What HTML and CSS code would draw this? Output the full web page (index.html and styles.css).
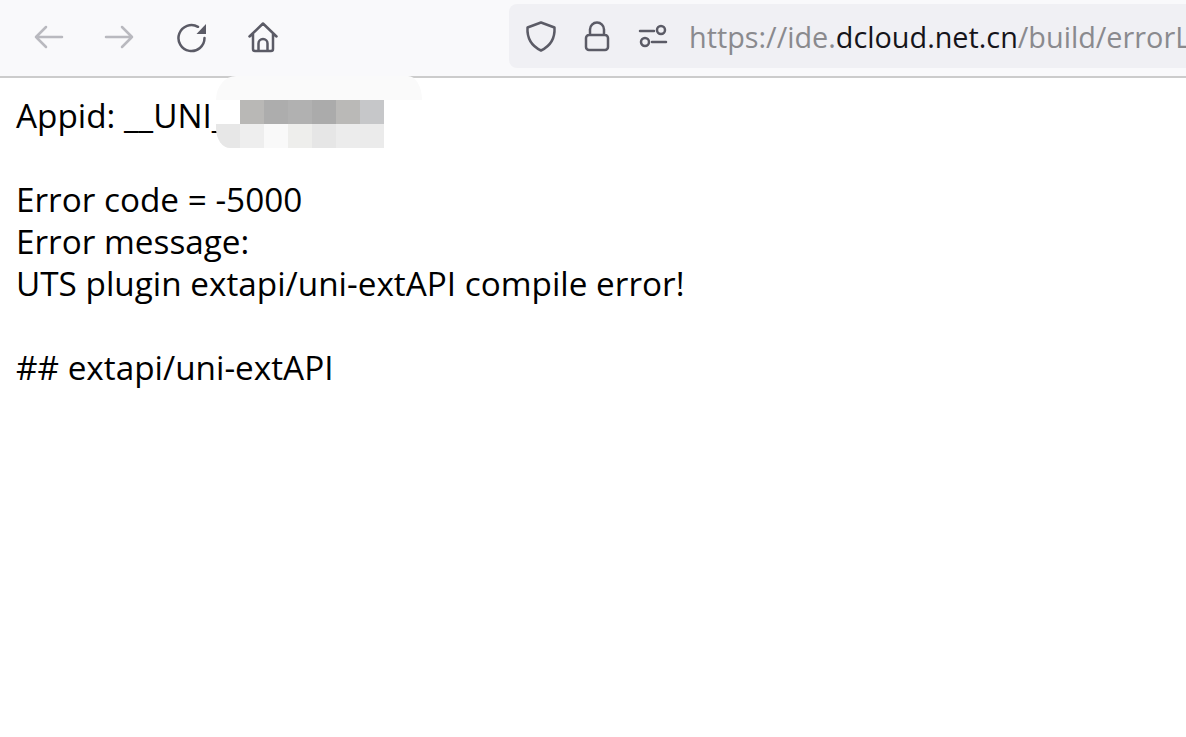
FILE: index.html
```html
<!DOCTYPE html>
<html>
<head>
  <meta charset="UTF-8">
  <title>Error log</title>
  <link rel="stylesheet" href="styles.css">
</head>
<body>
  <div class="toolbar">
    <div class="nav">
      <svg class="icon faded" viewBox="0 0 32 32"><path d="M30 16H4M14 6L4 16l10 10"/></svg>
      <svg class="icon faded" viewBox="0 0 32 32"><path d="M2 16h26M18 6l10 10-10 10"/></svg>
      <svg class="icon" viewBox="0 0 32 32"><path d="M28.500 17A13 13 0 1 1 22 5.800"/><path class="solid" d="M30 3V13H20.500z"/></svg>
      <svg class="icon" viewBox="0 0 32 32"><path d="M1.500 15.500L15 2.500l13.500 13M5 12.500V28a2 2 0 0 0 2 2h16a2 2 0 0 0 2-2V12.500M10.500 30v-7.500a4.500 4.500 0 0 1 9 0V30"/></svg>
    </div>
    <div class="urlbar">
      <svg class="icon" viewBox="0 0 32 32"><path d="M16 2.500L29.500 7.500c.500 9-2 17.500-13.500 23C4.500 25 2 16.500 2.500 7.500z"/></svg>
      <svg class="icon" viewBox="0 0 32 32"><path d="M9 15V9.500a7 7 0 0 1 14 0V15M8 15h16a3 3 0 0 1 3 3v9a3 3 0 0 1-3 3H8a3 3 0 0 1-3-3v-9a3 3 0 0 1 3-3z"/></svg>
      <svg class="icon" viewBox="0 0 32 32"><path d="M3 11h14M15 22h14"/><circle cx="24" cy="10" r="4"/><circle cx="8" cy="22" r="4"/></svg>
      <div class="url">https://ide.<b>dcloud.net.cn</b>/build/errorLog</div>
    </div>
  </div>
  <div class="log">Appid: __UNI_

Error code = -5000
Error message:
UTS plugin extapi/uni-extAPI compile error!

## extapi/uni-extAPI</div>
  <div class="blur">
    <div class="blur-top"></div>
    <div class="blur-row">
      <i class="c0"></i><i class="c1"></i><i class="c2"></i><i class="c3"></i><i class="c4"></i><i class="c5"></i><i class="c6"></i>
    </div>
    <div class="blur-row">
      <i class="c7"></i><i class="c8"></i><i class="c9"></i><i class="c10"></i><i class="c11"></i><i class="c12"></i><i class="c13"></i>
    </div>
  </div>
</body>
</html>
```

FILE: styles.css
```css
* {
  box-sizing: border-box;
}

html, body {
  height: 100%;
  margin: 0;
  overflow: hidden;
}

body {
  background: #fff;
  color: #000;
  font-family: "Open Sans", "Noto Sans", sans-serif;
  position: relative;
}

.toolbar {
  display: flex;
  height: 78px;
  padding-top: 4px;
  background: #f9f9fb;
  border-bottom: 2px solid #cccccc;
  overflow: hidden;
}

.nav {
  display: flex;
  flex: none;
  align-items: center;
  gap: 40px;
  width: 509px;
  height: 66px;
  padding-left: 32px;
}

.icon {
  flex: none;
  width: 32px;
  height: 32px;
  fill: none;
  stroke: #5b5b66;
  stroke-width: 2.500;
  stroke-linecap: round;
  stroke-linejoin: round;
}

.icon .solid {
  fill: #5b5b66;
  stroke: none;
}

.faded {
  opacity: 0.4;
}

.urlbar {
  display: flex;
  flex: none;
  width: 800px;
  align-items: center;
  gap: 24px;
  height: 64px;
  padding-left: 16px;
  background: #f0f0f4;
  border-radius: 8px 0 0 8px;
  white-space: nowrap;
}

.url {
  font-size: 28.800px;
  color: #8a8a8e;
  margin-left: -4px;
}

.url b {
  font-weight: 400;
  color: #15141a;
}

.log {
  padding: 16px 16px 0;
  font-size: 33.300px;
  line-height: 42px;
  white-space: pre-line;
}

/* pixelated patch over the app id */
.blur {
  position: absolute;
  left: 216px;
  top: 76px;
  width: 168px;
}

.blur-top {
  width: 206px;
  height: 24px;
  background: #fafafa;
  border-radius: 20px 14px 0 0 / 24px 24px 0 0;
}

.blur-row {
  display: flex;
  height: 24px;
}

.blur-row i {
  width: 24px;
}

.c0 { background: #fff; }
.c1 { background: #b9b8b6; }
.c2 { background: #adadad; }
.c3 { background: #b1b1b1; }
.c4 { background: #ababab; }
.c5 { background: #bab9b7; }
.c6 { background: #c6c7c9; }
.c7 {
  background: #e7e7e7;
  border-bottom-left-radius: 14px 20px;
}
.c8 { background: #eeeeee; }
.c9 { background: #f9f9f9; }
.c10 { background: #eeeeec; }
.c11 { background: #e6e6e6; }
.c12 { background: #ececec; }
.c13 { background: #ebebeb; }
```
